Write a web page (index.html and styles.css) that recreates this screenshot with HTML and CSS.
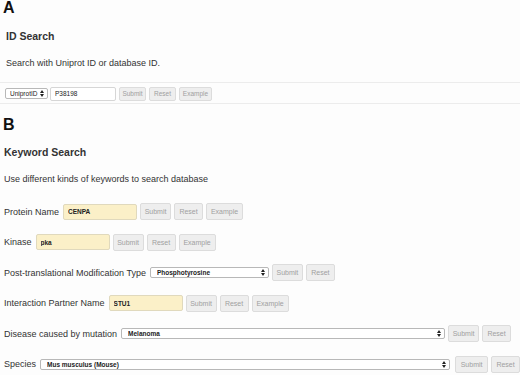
FILE: index.html
```html
<!DOCTYPE html>
<html>
<head>
    <meta charset="utf-8" />
    <title>Search</title>
    <link rel="stylesheet" href="styles.css">
</head>
<body>
    <div class="panel panel_a">
        <div class="letter">A</div>
        <h3 class="title">ID Search</h3>
        <p class="hint">Search with Uniprot ID or database ID.</p>
        <div class="id_bar">
            <label class="select select_id">
                <select><option>UniprotID</option></select>
                <svg class="arrows" width="4" height="7" viewBox="0 0 4 7"><path d="M0 3 L2 0 L4 3 Z M0 4 L2 7 L4 4 Z" /></svg>
            </label>
            <input type="text" class="text_id" value="P38198" />
            <button class="btn btn_id">Submit</button>
            <button class="btn btn_id">Reset</button>
            <button class="btn btn_id btn_id_ex">Example</button>
        </div>
    </div>

    <div class="panel panel_b">
        <div class="letter">B</div>
        <h3 class="title">Keyword Search</h3>
        <p class="hint">Use different kinds of keywords to search database</p>

        <div class="fields">
            <div class="field">
                <span class="label">Protein Name</span>
                <input type="text" class="text_kw" value="CENPA" />
                <button class="btn">Submit</button>
                <button class="btn btn_reset">Reset</button>
                <button class="btn btn_ex">Example</button>
            </div>
            <div class="field">
                <span class="label">Kinase</span>
                <input type="text" class="text_kw" value="pka" />
                <button class="btn">Submit</button>
                <button class="btn btn_reset">Reset</button>
                <button class="btn btn_ex">Example</button>
            </div>
            <div class="field">
                <span class="label">Post-translational Modification Type</span>
                <label class="select select_ptm">
                    <select><option>Phosphotyrosine</option></select>
                    <svg class="arrows" width="4" height="7" viewBox="0 0 4 7"><path d="M0 3 L2 0 L4 3 Z M0 4 L2 7 L4 4 Z" /></svg>
                </label>
                <button class="btn">Submit</button>
                <button class="btn btn_reset">Reset</button>
            </div>
            <div class="field">
                <span class="label">Interaction Partner Name</span>
                <input type="text" class="text_kw" value="STU1" />
                <button class="btn">Submit</button>
                <button class="btn btn_reset">Reset</button>
                <button class="btn btn_ex">Example</button>
            </div>
            <div class="field">
                <span class="label">Disease caused by mutation</span>
                <label class="select select_disease">
                    <select><option>Melanoma</option></select>
                    <svg class="arrows" width="4" height="7" viewBox="0 0 4 7"><path d="M0 3 L2 0 L4 3 Z M0 4 L2 7 L4 4 Z" /></svg>
                </label>
                <button class="btn">Submit</button>
                <button class="btn btn_reset">Reset</button>
            </div>
            <div class="field">
                <span class="label">Species</span>
                <label class="select select_species">
                    <select><option>Mus musculus (Mouse)</option></select>
                    <svg class="arrows" width="4" height="7" viewBox="0 0 4 7"><path d="M0 3 L2 0 L4 3 Z M0 4 L2 7 L4 4 Z" /></svg>
                </label>
                <button class="btn btn_wide">Submit</button>
                <button class="btn btn_reset">Reset</button>
            </div>
        </div>
    </div>
</body>
</html>
```

FILE: styles.css
```css
* {
    font-family: "Liberation Sans", Arial, Helvetica, sans-serif;
    box-sizing: border-box;
}

body {
    margin: 0;
    background-color: #fdfdfd;
    color: #333;
}

.panel {
    display: flex;
    flex-direction: column;
}

.letter {
    margin-left: 3px;
    height: 16px;
    font-size: 16px;
    line-height: 16px;
    font-weight: bold;
    color: #111;
}

.title {
    margin: 14px 0 0 0;
    height: 12px;
    font-size: 10.5px;
    line-height: 12px;
    font-weight: bold;
    color: #333;
}

.hint {
    margin: 16px 0 0 0;
    height: 11px;
    font-size: 9px;
    line-height: 11px;
    color: #333;
}

.panel_a .title,
.panel_a .hint {
    margin-left: 6px;
}

.panel_b {
    margin-top: 13px;
}

.panel_b .title {
    margin-top: 13px;
    margin-left: 4px;
}

.panel_b .hint {
    margin-left: 4px;
}

/* ID строка */
.id_bar {
    margin-top: 13px;
    display: flex;
    align-items: center;
    gap: 2px;
    height: 22px;
    padding: 3px 0 2px 5px;
    border-top: 1px solid #ececec;
    border-bottom: 1px solid #ececec;
}

.text_id {
    width: 66px;
    height: 14px;
    padding: 0 4px;
    border: 1px solid #d6d6d6;
    border-radius: 2px;
    background-color: #fff;
    font-size: 6.5px;
    color: #222;
    outline: none;
}

.btn {
    width: 31px;
    height: 17px;
    padding: 0;
    border: 1px solid #dcdcdc;
    border-radius: 2px;
    background-color: #eeeeee;
    font-size: 7px;
    color: #a0a0a0;
}

.btn_id {
    width: 27px;
    height: 14px;
    margin-left: 1px;
    font-size: 6.5px;
}

.btn_id_ex {
    width: 33px;
}

.btn_reset {
    width: 29px;
}

.btn_ex {
    width: 37px;
}

.btn_wide {
    width: 33px;
}

/* Поля поиска по ключевым словам */
.fields {
    margin-top: 18px;
    display: flex;
    flex-direction: column;
    gap: 13.6px;
    padding-left: 4px;
}

.field {
    display: flex;
    align-items: center;
    gap: 3px;
    height: 17px;
}

.label {
    margin-right: 1px;
    font-size: 9px;
    color: #333;
    white-space: nowrap;
}

.text_kw {
    width: 74px;
    height: 16px;
    padding: 0 4px;
    border: 1px solid #e0d9bd;
    border-radius: 2px;
    background-color: #fbf0c8;
    font-size: 6.5px;
    font-weight: bold;
    color: #222;
    outline: none;
}

.select {
    position: relative;
    display: flex;
    height: 11px;
}

.select select {
    appearance: none;
    -webkit-appearance: none;
    width: 100%;
    height: 11px;
    padding: 0 0 0 6px;
    border: 1px solid #b8b8b8;
    border-radius: 2px;
    background-color: #fff;
    font-size: 6.5px;
    font-weight: bold;
    line-height: 9px;
    color: #222;
    outline: none;
}

.arrows {
    position: absolute;
    right: 4px;
    top: 2px;
    fill: #222;
}

.select_id {
    width: 43px;
    height: 11px;
}

.select_id select {
    padding-left: 4px;
    font-weight: normal;
    font-size: 6.5px;
}

.select_ptm {
    width: 119px;
}

.select_disease {
    width: 324px;
}

.select_species {
    width: 411px;
    margin-right: 2px;
}
```
